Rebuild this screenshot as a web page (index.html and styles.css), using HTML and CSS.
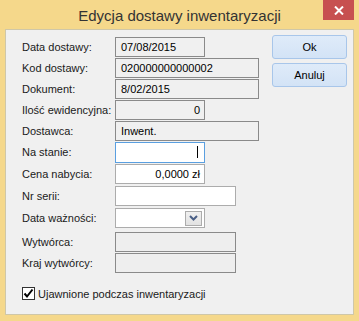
FILE: index.html
```html
<!DOCTYPE html>
<html lang="pl">
<head>
    <meta charset="UTF-8">
    <title>Edycja dostawy inwentaryzacji</title>
    <link rel="stylesheet" href="styles.css">
</head>
<body>
    <div class="window">
        <div class="titlebar">
            <div></div>
            <div class="title">Edycja dostawy inwentaryzacji</div>
            <button class="close" title="Zamknij">
                <svg width="10" height="9" viewBox="0 0 10 9"><path d="M1 0.5 L9 8.5 M9 0.5 L1 8.5" stroke="#fff" stroke-width="2"/></svg>
            </button>
        </div>
        <div class="panel">
            <div class="form">
                <div class="row">
                    <label>Data dostawy:</label>
                    <div class="box readonly w-short">07/08/2015</div>
                </div>
                <div class="row">
                    <label>Kod dostawy:</label>
                    <div class="box readonly w-long">020000000000002</div>
                </div>
                <div class="row">
                    <label>Dokument:</label>
                    <div class="box readonly w-long">8/02/2015</div>
                </div>
                <div class="row">
                    <label>Ilość ewidencyjna:</label>
                    <div class="box readonly w-short right">0</div>
                </div>
                <div class="row">
                    <label>Dostawca:</label>
                    <div class="box readonly w-long">Inwent.</div>
                </div>
                <div class="row gap2">
                    <label>Na stanie:</label>
                    <div class="box focus w-short right"><span class="caret"></span></div>
                </div>
                <div class="row gap2">
                    <label>Cena nabycia:</label>
                    <div class="box edit w-short right">0,0000 zł</div>
                </div>
                <div class="row gap2">
                    <label>Nr serii:</label>
                    <div class="box edit w-mid"></div>
                </div>
                <div class="row gap4">
                    <label>Data ważności:</label>
                    <div class="box edit w-short combo">
                        <span class="drop">
                            <svg width="9" height="6" viewBox="0 0 9 6"><path d="M1 1 L4.5 4.5 L8 1" fill="none" stroke="#4a5f86" stroke-width="2"/></svg>
                        </span>
                    </div>
                </div>
                <div class="row">
                    <label>Wytwórca:</label>
                    <div class="box disabled w-mid"></div>
                </div>
                <div class="row">
                    <label>Kraj wytwórcy:</label>
                    <div class="box disabled w-mid"></div>
                </div>
                <div class="check-row">
                    <span class="checkbox">
                        <svg width="11" height="11" viewBox="0 0 11 11"><path d="M1.5 5.5 L4 8.5 L9.5 1.5" fill="none" stroke="#000" stroke-width="2"/></svg>
                    </span>
                    <span>Ujawnione podczas inwentaryzacji</span>
                </div>
            </div>
            <div class="buttons">
                <button class="btn">Ok</button>
                <button class="btn">Anuluj</button>
            </div>
        </div>
    </div>
</body>
</html>
```

FILE: styles.css
```css
body {
    margin: 0;
    background: #f5d88b;
    font-family: 'Liberation Sans', Arial, sans-serif;
    font-size: 11px;
    color: #1a1a1a;
}
.window {
    width: 359px;
    height: 321px;
    display: flex;
    flex-direction: column;
}
.titlebar {
    height: 29px;
    display: grid;
    grid-template-columns: 1fr auto 1fr;
}
.title {
    font-size: 15px;
    color: #333;
    line-height: 29px;
    padding-top: 1px;
}
.close {
    justify-self: end;
    width: 31px;
    height: 20px;
    margin-right: 5px;
    border: none;
    padding: 0;
    background: #c75050;
    display: flex;
    align-items: center;
    justify-content: center;
}
.panel {
    margin: 0 5px 6px 5px;
    flex: 1;
    background: #f0f0f0;
    border: 1px solid #cfc7a8;
    padding: 5px 6px 0 16px;
    display: flex;
    justify-content: space-between;
    align-items: flex-start;
}
.form {
    padding-top: 2px;
}
.row {
    display: flex;
    align-items: center;
    height: 20px;
    margin-bottom: 1px;
}
.row.gap2 {
    margin-bottom: 2px;
}
.row.gap4 {
    margin-bottom: 4px;
}
.row label {
    width: 93px;
}
.box {
    box-sizing: border-box;
    height: 20px;
    padding: 0 5px;
    display: flex;
    align-items: center;
    color: #000;
}
.box.right {
    justify-content: flex-end;
    padding-right: 4px;
}
.w-short {
    width: 90px;
}
.w-mid {
    width: 121px;
}
.w-long {
    width: 144px;
}
.readonly {
    border: 1px solid #8a8a8a;
    background: #f0f0f0;
}
.disabled {
    border: 1px solid #8a8a8a;
    background: #eeeeee;
}
.edit {
    border: 1px solid #acacac;
    background: #fff;
}
.focus {
    border: 1px solid #5a9fe0;
    background: #fff;
    height: 21px;
}
.caret {
    width: 1px;
    height: 12px;
    background: #000;
    margin-right: 2px;
}
.combo {
    justify-content: flex-end;
    padding-right: 2px;
}
.drop {
    box-sizing: border-box;
    width: 17px;
    height: 15px;
    border: 1px solid #acacac;
    background: linear-gradient(#f0f0f0, #e2e2e2);
    display: flex;
    align-items: center;
    justify-content: center;
}
.check-row {
    display: flex;
    align-items: center;
    margin-top: 14px;
}
.checkbox {
    box-sizing: border-box;
    width: 13px;
    height: 13px;
    border: 1px solid #333;
    background: #fff;
    margin-right: 3px;
    display: flex;
    align-items: center;
    justify-content: center;
}
.buttons {
    display: flex;
    flex-direction: column;
    gap: 4px;
}
.btn {
    box-sizing: border-box;
    width: 75px;
    height: 24px;
    font-family: inherit;
    font-size: 11px;
    color: #000;
    border: 1px solid #a8c6ea;
    border-radius: 3px;
    background: linear-gradient(#dfebf9, #d3e3f6);
}
```
